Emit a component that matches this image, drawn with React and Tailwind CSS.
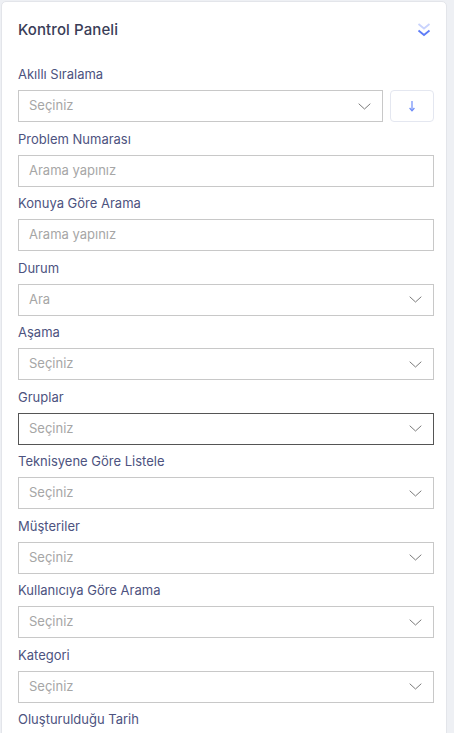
import React from "react";

const fields = [
  { label: "Problem Numarası", type: "input", text: "Arama yapınız" },
  { label: "Konuya Göre Arama", type: "input", text: "Arama yapınız" },
  { label: "Durum", type: "select", text: "Ara" },
  { label: "Aşama", type: "select", text: "Seçiniz" },
  { label: "Gruplar", type: "select", text: "Seçiniz", focused: true },
  { label: "Teknisyene Göre Listele", type: "select", text: "Seçiniz" },
  { label: "Müşteriler", type: "select", text: "Seçiniz" },
  { label: "Kullanıcıya Göre Arama", type: "select", text: "Seçiniz" },
  { label: "Kategori", type: "select", text: "Seçiniz" },
];

function Chevron() {
  return (
    <svg width="13" height="7" viewBox="0 0 13 7" fill="none" className="shrink-0 mr-[1px]">
      <path d="M0.7 0.7 L6.5 6 L12.3 0.7" stroke="#7a7a7a" strokeWidth="1" />
    </svg>
  );
}

function Label({ children }) {
  return (
    <div className="h-[20px] text-[13px] leading-[20px] text-[#4d5380] mb-[6px]">{children}</div>
  );
}

function Box({ children, focused, className = "" }) {
  return (
    <div
      className={`h-[32px] flex items-center pl-[10px] pr-[10px] border bg-white text-[13px] text-[#a6a6a6] ${
        focused ? "border-[#555555]" : "border-[#c8c8c8]"
      } ${className}`}
    >
      {children}
    </div>
  );
}

export default function App() {
  return (
    <div
      className="w-[454px] h-[733px] overflow-hidden bg-[#eef0f4]"
      style={{ fontFamily: "Inter, 'Noto Sans', sans-serif" }}
    >
      <div className="ml-[1px] mt-[1px] w-[446px] h-[740px] bg-white border border-[#e3e5ea] rounded-[5px] pl-[16px] pr-[12px]">
        <div className="h-[56px] flex items-center justify-between">
          <div className="text-[15px] font-medium text-[#3a3d57] tracking-[0.1px]">Kontrol Paneli</div>
          <svg width="14" height="16" viewBox="0 0 14 16" fill="none" className="mr-[3px]">
            <path d="M1.5 2 L7 6.5 L12.5 2" stroke="#c9d3fd" strokeWidth="1.8" />
            <path d="M1.5 8.5 L7 13 L12.5 8.5" stroke="#5d7cf7" strokeWidth="1.8" />
          </svg>
        </div>

        <div className="flex flex-col gap-y-[6.5px] pt-[6px]">
          <div>
            <Label>Akıllı Sıralama</Label>
            <div className="flex gap-[7px]">
              <Box className="flex-1 justify-between">
                <span>Seçiniz</span>
                <Chevron />
              </Box>
              <div className="w-[44px] h-[32px] border border-[#e4e7f0] rounded-[4px] flex items-center justify-center">
                <svg width="8" height="12" viewBox="0 0 8 12" fill="none">
                  <path d="M4 1 V10.5" stroke="#6d8cf8" strokeWidth="1.2" />
                  <path d="M1.6 8 L4 10.8 L6.4 8" stroke="#6d8cf8" strokeWidth="1.2" />
                </svg>
              </div>
            </div>
          </div>

          {fields.map((f) => (
            <div key={f.label}>
              <Label>{f.label}</Label>
              <Box focused={f.focused} className="justify-between">
                <span>{f.text}</span>
                {f.type === "select" && <Chevron />}
              </Box>
            </div>
          ))}

          <div>
            <Label>Oluşturulduğu Tarih</Label>
          </div>
        </div>
      </div>
    </div>
  );
}
